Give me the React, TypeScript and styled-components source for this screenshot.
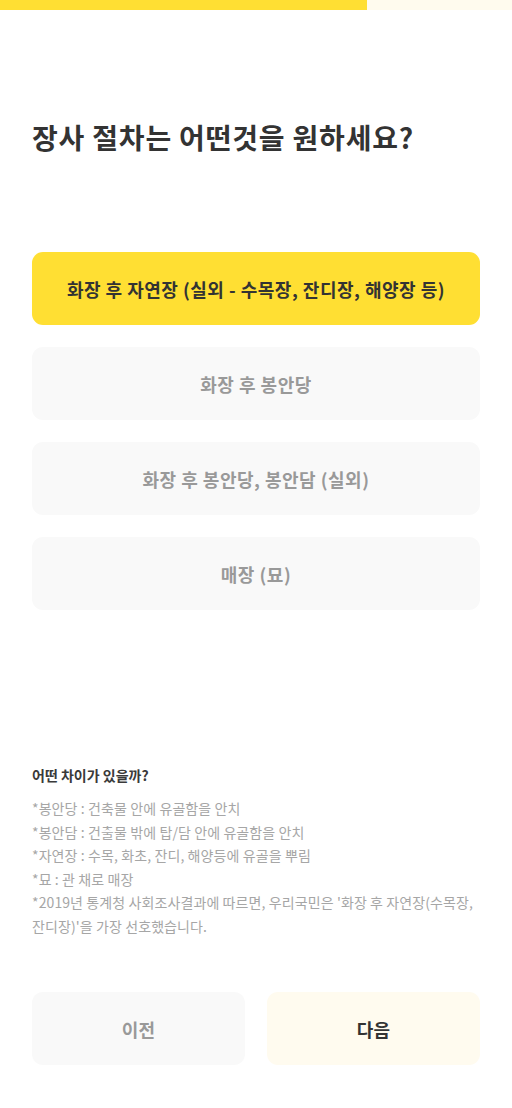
import React from "react";
import styled, { createGlobalStyle } from "styled-components";

const Global = createGlobalStyle`
  html, body { margin: 0; padding: 0; background: #ffffff; }
  body { font-family: "Noto Sans CJK KR", "Noto Sans", sans-serif; }
  * { box-sizing: border-box; }
`;

const Page = styled.div`
  width: 512px;
  height: 1108px;
  display: flex;
  flex-direction: column;
  background: #fff;
`;

const Progress = styled.div`
  height: 10px;
  background: #fffbee;
  display: flex;
`;

const ProgressFill = styled.div`
  height: 100%;
  background: #ffdf33;
`;

const Body = styled.div`
  display: flex;
  flex-direction: column;
  padding: 0 32px;
  flex: 1;
`;

const Title = styled.h1`
  margin: 109px 0 0;
  font-size: 28px;
  line-height: 36px;
  font-weight: 700;
  color: #333333;
  letter-spacing: 0.8px;
`;

const Options = styled.div`
  display: flex;
  flex-direction: column;
  gap: 22px;
  margin-top: 97px;
`;

const Option = styled.button<{ $active?: boolean }>`
  height: 73px;
  border: none;
  border-radius: 11px;
  background: ${(p) => (p.$active ? "#ffdf33" : "#f9f9f9")};
  color: ${(p) => (p.$active ? "#333333" : "#999999")};
  font-family: "Noto Sans CJK KR", "Noto Sans", sans-serif;
  font-size: 18px;
  font-weight: 700;
  letter-spacing: 0.5px;
  display: flex;
  align-items: center;
  justify-content: center;
  cursor: pointer;
`;

const Info = styled.div`
  margin-top: 155px;
  display: flex;
  flex-direction: column;
`;

const InfoTitle = styled.h2`
  margin: 0 0 12px;
  font-size: 14px;
  line-height: 20px;
  font-weight: 700;
  color: #3a3a3a;
  letter-spacing: 0;
`;

const InfoLine = styled.p`
  margin: 0;
  font-size: 14px;
  line-height: 23.6px;
  font-weight: 400;
  color: #a6a6a6;
  letter-spacing: 0.1px;
  word-break: keep-all;
`;

const Footer = styled.div`
  margin-top: auto;
  margin-bottom: 43px;
  display: grid;
  grid-template-columns: 1fr 1fr;
  gap: 22px;
`;

const NavButton = styled.button<{ $primary?: boolean }>`
  height: 73px;
  border: none;
  border-radius: 11px;
  background: ${(p) => (p.$primary ? "#fffbef" : "#f9f9f9")};
  color: ${(p) => (p.$primary ? "#333333" : "#999999")};
  font-family: "Noto Sans CJK KR", "Noto Sans", sans-serif;
  font-size: 18px;
  font-weight: 700;
  letter-spacing: 0.3px;
  cursor: pointer;
`;

const options = [
  "화장 후 자연장 (실외 - 수목장, 잔디장, 해양장 등)",
  "화장 후 봉안당",
  "화장 후 봉안당, 봉안담 (실외)",
  "매장 (묘)",
];

const infoLines = [
  "*봉안당 : 건축물 안에 유골함을 안치",
  "*봉안담 : 건출물 밖에 탑/담 안에 유골함을 안치",
  "*자연장 : 수목, 화초, 잔디, 해양등에 유골을 뿌림",
  "*묘 : 관 채로 매장",
  "*2019년 통계청 사회조사결과에 따르면, 우리국민은 '화장 후 자연장(수목장, 잔디장)'을 가장 선호했습니다.",
];

export default function App() {
  return (
    <>
      <Global />
      <Page>
        <Progress>
          <ProgressFill style={{ width: `${(367 / 512) * 100}%` }} />
        </Progress>
        <Body>
          <Title>장사 절차는 어떤것을 원하세요?</Title>
          <Options>
            {options.map((o, i) => (
              <Option key={o} $active={i === 0}>
                {o}
              </Option>
            ))}
          </Options>
          <Info>
            <InfoTitle>어떤 차이가 있을까?</InfoTitle>
            {infoLines.map((l) => (
              <InfoLine key={l}>{l}</InfoLine>
            ))}
          </Info>
          <Footer>
            <NavButton>이전</NavButton>
            <NavButton $primary>다음</NavButton>
          </Footer>
        </Body>
      </Page>
    </>
  );
}
